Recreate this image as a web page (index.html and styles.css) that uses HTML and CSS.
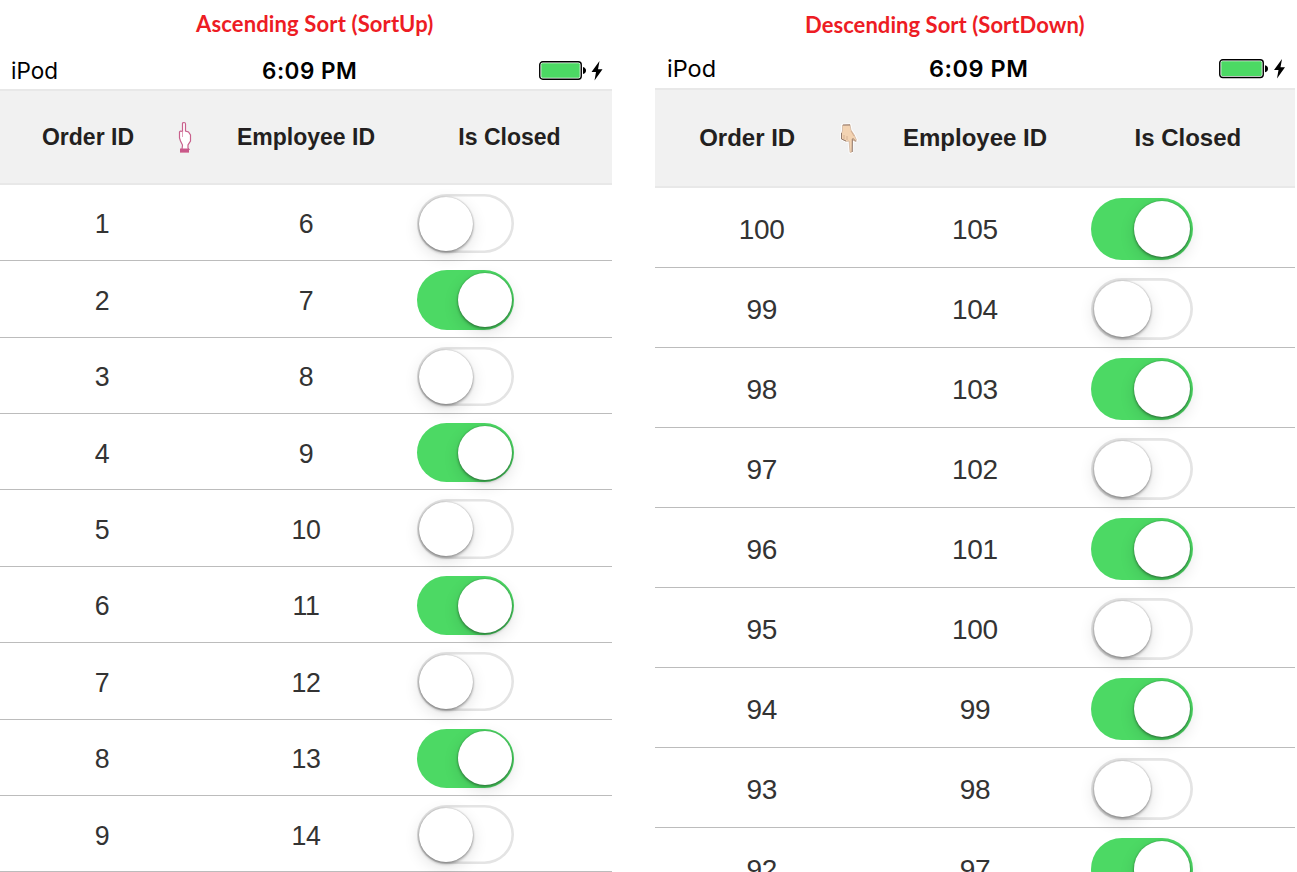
FILE: index.html
```html
<!DOCTYPE html>
<html lang="en">
<head>
<meta charset="utf-8">
<title>Order sorting</title>
<link rel="stylesheet" href="styles.css">
</head>
<body>
<main class="board">
  <section class="device asc">
    <h2 class="caption"><span>Ascending Sort (SortUp)</span></h2>
    <div class="status">
      <span class="carrier">iPod</span><span class="clock">6:09 PM</span>
      <svg class="power" viewBox="0 0 64 20"><rect x=".75" y=".75" width="41.5" height="17.500" rx="3" fill="#fff" stroke="#000" stroke-width="1.4"/><rect x="2.3" y="2.3" width="38.400" height="14.400" rx="1" fill="#4cd964"/><path d="M44 6Q47 7 47 9.500T44 13Z"/><path d="M60.500 0L52.500 11H57L55.500 19.500L63.500 8.300H59Z"/></svg>
    </div>
    <div class="head"><div>Order ID<svg class="hand" viewBox="0 0 14 32"><path d="M4.500 11V2.500Q4.500 1.500 6 1.500Q7.500 1.500 7.500 3V10L10.500 11L12.500 14V20L10 24V27L11 28.500H4L4.500 24L2.500 20L1.500 17V11Q2 9.500 4.500 10.500Z" fill="#fff" stroke="#c8608c" stroke-width="1.200"/><path d="M4.500 10V16" fill="none" stroke="#d989aa" stroke-width=".8"/><path d="M2 27.500H11V31H2Z" fill="#c9588a"/><path d="M2 31H11V32H2Z" fill="#dc91ad"/></svg></div><div>Employee ID</div><div>Is Closed</div></div>
    <div class="rows"></div>
  </section>
  <section class="device desc">
    <h2 class="caption"><span>Descending Sort (SortDown)</span></h2>
    <div class="status">
      <span class="carrier">iPod</span><span class="clock">6:09 PM</span>
      <svg class="power" viewBox="0 0 67 21"><rect x=".75" y=".75" width="43.500" height="17.800" rx="3" fill="#fff" stroke="#000" stroke-width="1.4"/><rect x="2.3" y="2.3" width="40.400" height="14.700" rx="1" fill="#4cd964"/><path d="M46 6.200Q49 7 49 9.700T46 13.200Z"/><path d="M63 0L55 11H59.500L58 19.500L66 8.300H61.500Z"/></svg>
    </div>
    <div class="head"><div>Order ID<svg class="hand" viewBox="0 0 18 31"><path d="M2.500 2L10 1.500L11 7L14 11.500L16.500 17L15.500 18.500L12.500 17L12 29L10 29.500L9 18L6.500 18.500L1.500 16V10L2.500 8Z" fill="#f2cfab" stroke="#fff" stroke-width="2.500" stroke-linejoin="round"/><path d="M2.500 2L10 1.500L11 7L14 11.500L16.500 17L15.500 18.500L12.500 17L12 29L10 29.500L9 18L6.500 18.500L1.500 16V10L2.500 8Z" fill="#f3d3b2" stroke="#b99882" stroke-width=".5"/><path d="M3 2H10M1.500 10V16L6 18M12.300 16V29M12.500 15L16 18.500" fill="none" stroke="#80685d" stroke-width=".8"/><path d="M4 12V16M7 13V17M11 8L14 13" fill="none" stroke="#c9a388" stroke-width=".7"/></svg></div><div>Employee ID</div><div>Is Closed</div></div>
    <div class="rows"></div>
  </section>
</main>
<script src="rows.js"></script>
</body>
</html>
```
FILE: styles.css
```css
* { box-sizing: border-box; }
body { margin: 0; background: #fff; overflow: hidden; }
.board { display: flex; gap: 43px; width: 1297px; height: 872px; overflow: hidden; }
.device { flex: none; width: 612px; height: 872px; overflow: hidden; --u: .956px; --col: 204px; --row: 76.4px; }
.desc { width: 640px; --u: 1px; --col: 213.33px; --row: 80px; }
.caption { margin: 0; height: 48px; padding: 10px 0 0 196px; font: 700 22px/28px Lato, sans-serif; color: #ed1c24; white-space: nowrap; letter-spacing: .14px; }
.desc .caption { padding-left: 150px; padding-top: 11px; letter-spacing: .05px; }
.status { display: flex; align-items: flex-start; height: 41px; padding: 9px 9px 0 11px; color: #000; font: 400 22.5px/28px Inter, sans-serif; }
.desc .status { height: 40px; padding: 7px 9px 0 12px; font-size: 23.5px; }
.carrier { width: 251px; }
.desc .carrier { width: 262px; }
.clock { font-weight: 600; letter-spacing: .5px; }
.power { width: 64px; height: 20px; margin: 4px 0 0 auto; overflow: visible; }
.desc .power { width: 67px; height: 21px; }
.head { display: grid; grid-template-columns: repeat(3, var(--col)); align-items: center; height: 95.8px; background: #f1f1f1; border-top: 2px solid #e8e8e8; border-bottom: 2px solid #e8e8e8; font: 700 23px/30px "Liberation Sans", sans-serif; color: #231f20; text-align: center; }
.desc .head { height: 100px; font-size: 24px; }
.head > div { position: relative; }
.head > div:first-child { padding-right: 28px; }
.head > div:last-child { padding-right: 1px; }
.desc .head > div:first-child { padding-right: 29px; }
.hand { position: absolute; left: 178px; top: -1px; width: 14px; height: 32px; }
.desc .hand { left: 185px; top: 0; width: 18px; height: 31px; }
.row { display: grid; grid-template-columns: repeat(3, var(--col)); align-items: center; height: var(--row); border-bottom: 1px solid #bcbcbc; font: 400 calc(28 * var(--u))/32px "Liberation Sans", sans-serif; color: #333; text-align: center; letter-spacing: -.3px; }
.rows { height: 700px; }
.num { padding-top: 4px; }
.switch { margin: 2px 0 0 calc(9.5 * var(--u)); width: calc(102 * var(--u)); height: calc(62 * var(--u)); padding: calc(3 * var(--u)); border-radius: 99px; display: flex; box-shadow: inset 0 0 0 calc(2.700 * var(--u)) #e4e4e4; }
.switch i { width: calc(56.500 * var(--u)); height: calc(56.500 * var(--u)); border-radius: 50%; background: #fff; box-shadow: 0 2px 3px rgba(0,0,0,.3), 0 0 2px rgba(0,0,0,.3), 0 5px 16px rgba(0,0,0,.12); }
.asc .switch { margin-left: 8.600px; }
.switch.on { justify-content: flex-end; background: #4cd964; box-shadow: none; }
.asc .switch.on { padding-right: 2px; }
```
FILE: rows.js
```javascript
function fill(selector, start, step, count) {
  const rows = document.querySelector(selector);
  for (let k = 0; k < count; k++) {
    const id = start + k * step;
    const on = id % 2 === 0 ? " on" : "";
    rows.insertAdjacentHTML("beforeend",
      `<div class="row"><div class="num">${id}</div><div class="num">${id + 5}</div><div class="switch${on}"><i></i></div></div>`);
  }
}
fill(".asc .rows", 1, 1, 9);
fill(".desc .rows", 100, -1, 9);
```
